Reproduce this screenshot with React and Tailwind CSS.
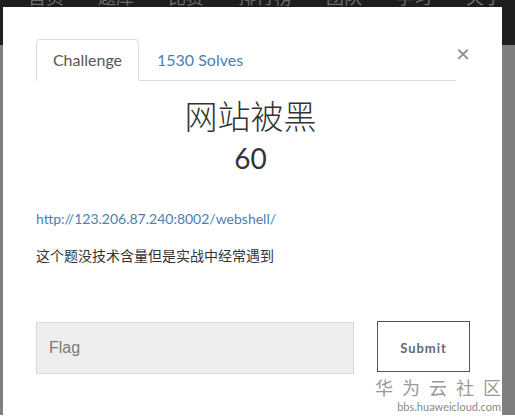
import { useState } from "react";

const navItems = ["首页", "题库", "比赛", "排行榜", "团队", "学习", "关于"];

const ChallengeModal = () => {
  const [flag, setFlag] = useState("");

  return (
    <div className="w-[499px] h-[408px] bg-white flex flex-col">
      {/* Tabs + close */}
      <div className="flex items-start pt-[32px] pl-[33px] pr-[30px]">
        <div className="flex-1 flex border-b border-[#dddddd] h-[42px]">
          <div className="w-[103px] h-[42px] border border-[#dddddd] border-b-white rounded-t-[4px] bg-white flex items-center justify-center text-[16px] text-[#555555] -mb-px">
            Challenge
          </div>
          <div className="h-[41px] flex items-center pl-[18px] text-[16px] text-[#4a7fb0]">
            1530 Solves
          </div>
        </div>
        <div className="w-[16px] flex justify-start pt-[2px] text-[24px] leading-none text-[#888888]">
          ×
        </div>
      </div>

      {/* Title and value */}
      <div className="flex flex-col items-center pt-[15px] pr-[4px]">
        <h2 className="text-[33px] leading-[40px] font-light text-[#333333]">网站被黑</h2>
        <h3 className="text-[28px] leading-[36px] text-[#333333] mt-[4px]">60</h3>
      </div>

      {/* Description */}
      <div className="pl-[33px] pt-[32px] text-[14px]">
        <a className="text-[#4a7fb0] leading-[18px] text-[14px]">http://123.206.87.240:8002/webshell/</a>
        <p className="text-[#333333] mt-[18px] leading-[18px]">这个题没技术含量但是实战中经常遇到</p>
      </div>

      {/* Flag form */}
      <div className="flex items-start pl-[33px] pt-[57px] gap-[23px]">
        <input
          value={flag}
          onChange={(e) => setFlag(e.target.value)}
          placeholder="Flag"
          className="w-[318px] h-[52px] bg-[#eeeeee] border border-[#d9d9d9] px-[12px] text-[16px] text-[#555555] placeholder:text-[#7a7a7a] outline-none"
          style={{ fontFamily: '"Liberation Sans", Arial, sans-serif' }}
        />
        <button className="w-[93px] h-[51px] mt-[-1px] pt-[4px] border border-[#555555] bg-white text-[13px] font-bold tracking-[1px] text-[#5f6b73]">
          Submit
        </button>
      </div>

      {/* watermark */}
      <div className="flex flex-col items-end pr-[1px] pt-[5px] text-[#9a9a9a] leading-none">
        <span className="text-[18px] tracking-[9px] mr-[-9px]">华为云社区</span>
        <span className="text-[11px] mt-[4px] text-[#8a8a8a]">bbs.huaweicloud.com</span>
      </div>
    </div>
  );
};

const App = () => {
  return (
    <div
      className="w-[515px] h-[420px] overflow-hidden relative bg-[linear-gradient(to_bottom,#1e1e1e_0px,#1e1e1e_45px,#7f7f7f_45px,#7f7f7f_415px,#ffffff_415px)]"
      style={{ fontFamily: 'Lato, "Noto Sans CJK SC", sans-serif' }}
    >
      {/* faded nav behind the modal */}
      <div className="h-[7px] overflow-hidden flex gap-[34px] pl-[28px]">
        {navItems.map((item) => (
          <span key={item} className="text-[18px] leading-none -mt-[12px] text-[#6b6b6b]">
            {item}
          </span>
        ))}
      </div>
      <div className="pl-[3px]">
        <ChallengeModal />
      </div>
    </div>
  );
};

export default App;
